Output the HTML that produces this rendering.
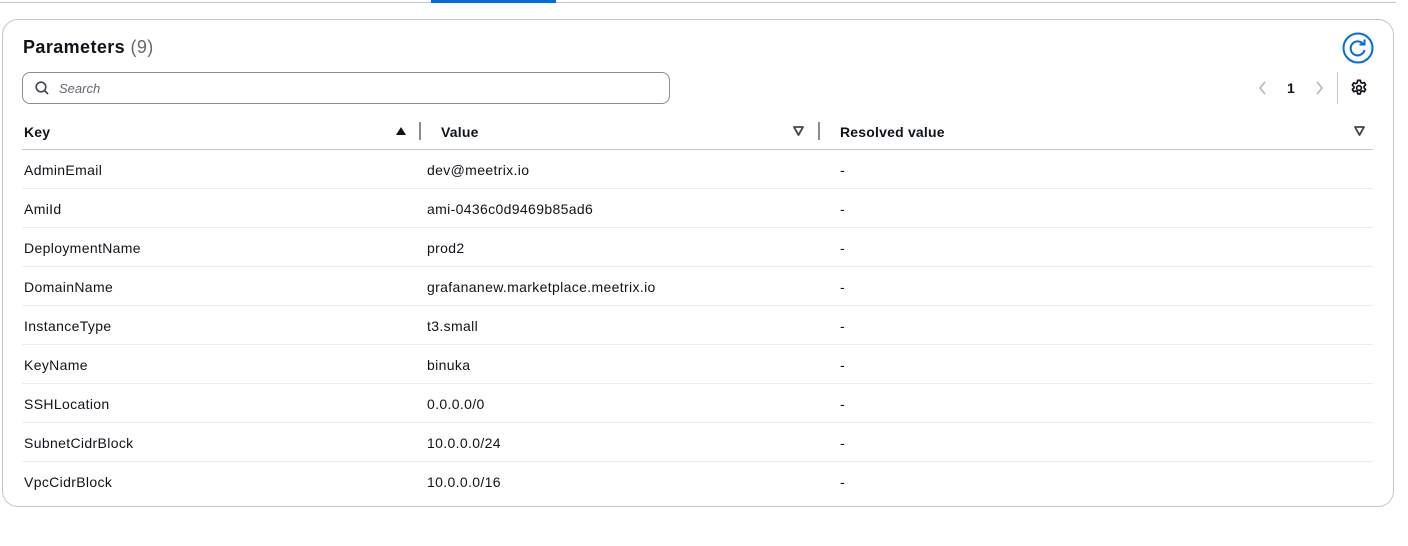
<!DOCTYPE html>
<html><head><style>
body{margin:0;width:1408px;height:546px;background:#fff;font-family:"Liberation Sans",sans-serif;color:#0f141a;position:relative;overflow:hidden}
.top{position:absolute;left:0;top:2px;width:1396px;height:1px;background:#c6c6cd}
.tab{position:absolute;left:431px;top:0;width:125px;height:3px;background:#006ce0}
.card{position:absolute;left:2px;top:19px;width:1390px;height:486px;border:1px solid #c6c6cd;border-radius:16px}
.abs{position:absolute}
h1{position:absolute;left:23px;top:37px;margin:0;font-size:18px;font-weight:bold;letter-spacing:0.4px}
h1 span{font-weight:normal;color:#656871}
.search{position:absolute;left:22px;top:72px;width:646px;height:30px;border:1px solid #8c8c94;border-radius:8px}
.search i{position:absolute;left:36px;top:8px;font-size:13px;color:#656871}
.th{position:absolute;top:124px;font-size:14px;font-weight:bold;letter-spacing:0.2px}
.row{position:absolute;left:22px;width:1351px;height:38px;border-top:1px solid #ebebf0;font-size:14px;letter-spacing:0.35px}
.row span{position:absolute;top:12px}
.div{position:absolute;width:2px;height:18px;background:#8c8c94;top:122px}
</style></head><body>
<div class="top"></div><div class="tab"></div>
<div class="card"></div>
<h1>Parameters <span>(9)</span></h1>
<svg class="abs" style="left:1342px;top:32px" width="32" height="32" viewBox="0 0 32 32"><circle cx="16" cy="16" r="14.5" fill="none" stroke="#006ce0" stroke-width="2"/><path d="M21.5 12.5A7 7 0 1 0 22.5 18" fill="none" stroke="#006ce0" stroke-width="2"/><path d="M17.5 12.5h5v-5" fill="none" stroke="#006ce0" stroke-width="2"/></svg>
<div class="search"><svg class="abs" style="left:12px;top:8px" width="14" height="14" viewBox="0 0 14 14"><circle cx="6" cy="6" r="4.8" fill="none" stroke="#424650" stroke-width="1.6"/><path d="M9.5 9.5l3.5 3.5" stroke="#424650" stroke-width="1.6"/></svg><i>Search</i></div>
<svg class="abs" style="left:1257px;top:81px" width="12" height="14" viewBox="0 0 12 14"><path d="M8 1L3 7l5 6" fill="none" stroke="#b4b4bb" stroke-width="1.6"/></svg>
<div class="abs" style="left:1287px;top:80px;font-size:14px;font-weight:bold">1</div>
<svg class="abs" style="left:1313px;top:81px" width="12" height="14" viewBox="0 0 12 14"><path d="M4 1l5 6-5 6" fill="none" stroke="#b4b4bb" stroke-width="1.6"/></svg>
<div class="abs" style="left:1337px;top:72px;width:1px;height:32px;background:#c6c6cd"></div>
<svg class="abs" style="left:1350px;top:79px" width="18" height="18" viewBox="0 0 16 16"><path d="M6.8 1.2h2.4l.4 1.9 1.3.7 1.8-.7 1.2 2.1-1.4 1.3v1.4l1.4 1.3-1.2 2.1-1.8-.7-1.3.7-.4 1.9H6.8l-.4-1.9-1.3-.7-1.8.7-1.2-2.1 1.4-1.3V6.8L2.1 5.5l1.2-2.1 1.8.7 1.3-.7z" fill="none" stroke="#0f141a" stroke-width="1.5" stroke-linejoin="round"/><circle cx="8" cy="8" r="2.1" fill="none" stroke="#0f141a" stroke-width="1.5"/></svg>
<div class="th" style="left:24px">Key</div>
<svg class="abs" style="left:395px;top:126px" width="12" height="10" viewBox="0 0 12 10"><path d="M1 9h10L6 1z" fill="#0f141a"/></svg>
<div class="div" style="left:419px"></div>
<div class="th" style="left:441px">Value</div>
<svg class="abs" style="left:793px;top:126px" width="11" height="10" viewBox="0 0 11 10"><path d="M1 1h9L5.5 9z" fill="none" stroke="#424650" stroke-width="1.8" stroke-linejoin="round"/></svg>
<div class="div" style="left:818px"></div>
<div class="th" style="left:840px">Resolved value</div>
<svg class="abs" style="left:1354px;top:126px" width="11" height="10" viewBox="0 0 11 10"><path d="M1 1h9L5.5 9z" fill="none" stroke="#424650" stroke-width="1.8" stroke-linejoin="round"/></svg>
<div class="row" style="top:149px;border-top:1px solid #c6c6cd"><span style="left:2px">AdminEmail</span><span style="left:405px">dev@meetrix.io</span><span style="left:818px">-</span></div>
<div class="row" style="top:188px"><span style="left:2px">AmiId</span><span style="left:405px">ami-0436c0d9469b85ad6</span><span style="left:818px">-</span></div>
<div class="row" style="top:227px"><span style="left:2px">DeploymentName</span><span style="left:405px">prod2</span><span style="left:818px">-</span></div>
<div class="row" style="top:266px"><span style="left:2px">DomainName</span><span style="left:405px">grafananew.marketplace.meetrix.io</span><span style="left:818px">-</span></div>
<div class="row" style="top:305px"><span style="left:2px">InstanceType</span><span style="left:405px">t3.small</span><span style="left:818px">-</span></div>
<div class="row" style="top:344px"><span style="left:2px">KeyName</span><span style="left:405px">binuka</span><span style="left:818px">-</span></div>
<div class="row" style="top:383px"><span style="left:2px">SSHLocation</span><span style="left:405px">0.0.0.0/0</span><span style="left:818px">-</span></div>
<div class="row" style="top:422px"><span style="left:2px">SubnetCidrBlock</span><span style="left:405px">10.0.0.0/24</span><span style="left:818px">-</span></div>
<div class="row" style="top:461px"><span style="left:2px">VpcCidrBlock</span><span style="left:405px">10.0.0.0/16</span><span style="left:818px">-</span></div>
</body></html>
